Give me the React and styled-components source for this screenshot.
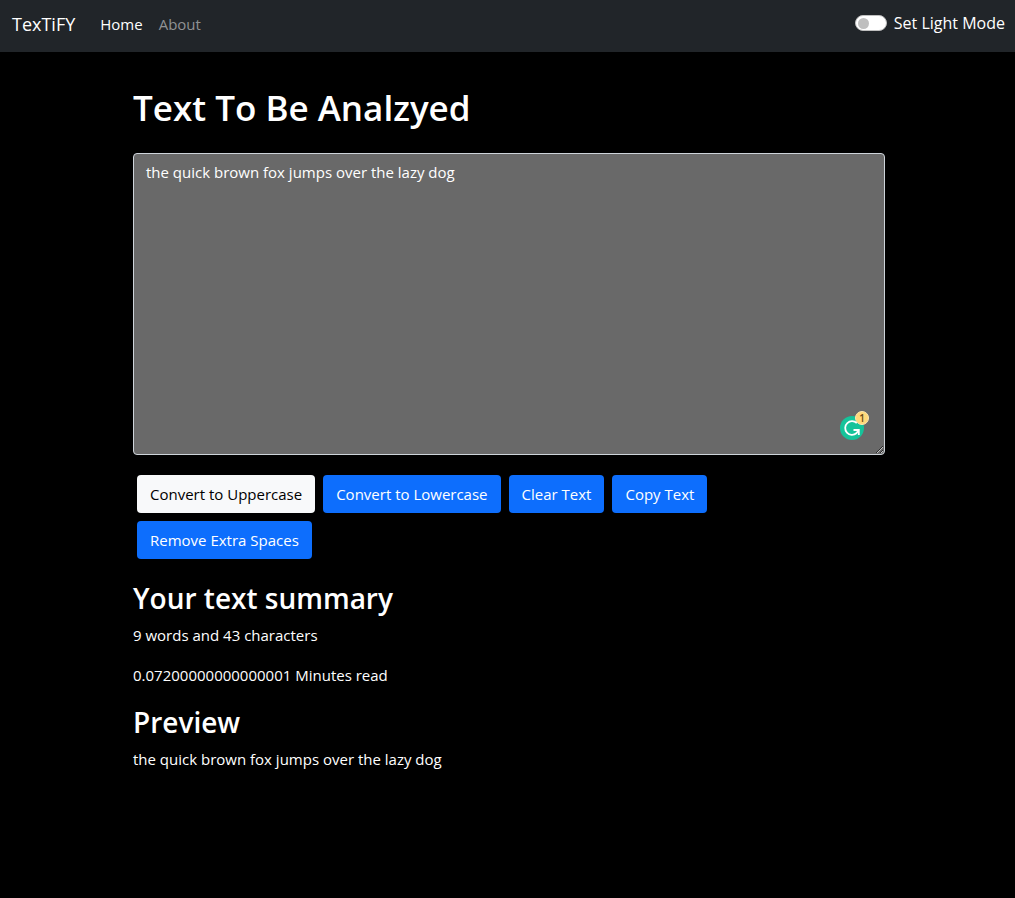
import React, { useState } from "react";
import styled, { createGlobalStyle } from "styled-components";

const GlobalStyle = createGlobalStyle`
  *, *::before, *::after { box-sizing: border-box; }
  body {
    margin: 0;
    background: ${(p) => (p.$light ? "#fff" : "#000")};
    color: ${(p) => (p.$light ? "#000" : "#fff")};
    font-family: "Open Sans", "Noto Sans", sans-serif;
    font-size: 15px;
    line-height: 24px;
  }
`;

const Navbar = styled.nav`
  display: flex;
  align-items: center;
  justify-content: space-between;
  height: 52px;
  padding: 0 10px 4px 12px;
  background: #212529;
  color: #fff;
`;

const NavGroup = styled.div`
  display: flex;
  align-items: center;
`;

const Brand = styled.a`
  margin-right: 17px;
  color: #fff;
  font-size: 18px;
  line-height: 30px;
  text-decoration: none;
`;

const NavLink = styled.a`
  padding: 0 8px;
  color: ${(p) => (p.$active ? "#fff" : "#909294")};
  text-decoration: none;
`;

const SwitchLabel = styled.label`
  display: flex;
  align-items: center;
  gap: 7px;
  padding-bottom: 2px;
  font-size: 16px;
`;

const Switch = styled.input`
  appearance: none;
  display: flex;
  align-items: center;
  width: 32px;
  height: 16px;
  margin: 0;
  padding: 0 2px;
  border: 1px solid #bfbfbf;
  border-radius: 8px;
  background: #fff;

  &::before {
    content: "";
    width: 11px;
    height: 11px;
    border-radius: 50%;
    background: #bfbfbf;
  }

  &:checked {
    justify-content: flex-end;
    background: #0d6efd;
  }
`;

const Main = styled.main`
  padding: 32px 130px 32px 133px;
`;

const Title = styled.h1`
  margin: 0 0 21px;
  font-size: 35px;
  font-weight: 600;
  line-height: 48px;
`;

const Editor = styled.div`
  position: relative;
  margin-bottom: 16px;
`;

const TextArea = styled.textarea`
  display: block;
  width: 100%;
  height: 302px;
  padding: 6px 12px;
  border: 1px solid #ced4da;
  border-radius: 4px;
  outline: none;
  background: dimgray;
  color: #fff;
  font: inherit;
`;

const Assistant = styled.svg`
  position: absolute;
  right: 14px;
  bottom: 12px;
  width: 32px;
  height: 34px;
`;

const Actions = styled.div`
  display: flex;
  flex-wrap: wrap;
  gap: 8px;
  padding: 4px 4px 0;
`;

const Button = styled.button`
  height: 38px;
  padding: 0 13px;
  border: 0;
  border-radius: 4px;
  background: ${(p) => (p.$pale ? "#f8f9fa" : "#0d6efd")};
  color: ${(p) => (p.$pale ? "#000" : "#fff")};
  font: inherit;
`;

const Summary = styled.section`
  margin-top: 20px;
`;

const Subtitle = styled.h2`
  margin: 0 0 6px;
  font-size: 28px;
  font-weight: 600;
  line-height: 38px;
`;

const Paragraph = styled.p`
  margin: 0 0 16px;
`;

export default function App() {
  const [text, setText] = useState("the quick brown fox jumps over the lazy dog");
  const [light, setLight] = useState(false);
  const words = text.split(/\s+/).filter(Boolean).length;

  return (
    <>
      <GlobalStyle $light={light} />
      <Navbar>
        <NavGroup>
          <Brand href="#">TexTiFY</Brand>
          <NavLink href="#" $active>Home</NavLink>
          <NavLink href="#about">About</NavLink>
        </NavGroup>
        <SwitchLabel>
          <Switch
            type="checkbox"
            role="switch"
            checked={light}
            onChange={(e) => setLight(e.target.checked)}
          />
          Set Light Mode
        </SwitchLabel>
      </Navbar>
      <Main>
        <Title id="editor-title">Text To Be Analzyed</Title>
        <Editor>
          <TextArea
            aria-labelledby="editor-title"
            spellCheck={false}
            value={text}
            onChange={(e) => setText(e.target.value)}
          />
          <Assistant viewBox="0 0 32 34" aria-hidden="true">
            <circle cx="13" cy="19" r="12" fill="#15c39a" />
            <path
              d="M17.8 14.2A6.8 6.8 0 1 0 17.4 24.2L19.4 21.4M14.5 21H19.8V26"
              fill="none"
              stroke="#fff"
              strokeWidth="1.8"
            />
            <circle cx="23" cy="9" r="6.5" fill="#ffd87a" stroke="#ffe9b0" />
            <text x="23" y="13" textAnchor="middle" fontSize="10" fontWeight="600" fill="#6b4a16">1</text>
          </Assistant>
        </Editor>
        <Actions>
          <Button type="button" $pale onClick={() => setText(text.toUpperCase())}>Convert to Uppercase</Button>
          <Button type="button" onClick={() => setText(text.toLowerCase())}>Convert to Lowercase</Button>
          <Button type="button" onClick={() => setText("")}>Clear Text</Button>
          <Button type="button" onClick={() => navigator.clipboard.writeText(text)}>Copy Text</Button>
          <Button type="button" onClick={() => setText(text.split(/ +/).join(" "))}>Remove Extra Spaces</Button>
        </Actions>
        <Summary>
          <Subtitle>Your text summary</Subtitle>
          <Paragraph>{`${words} words and ${text.length} characters`}</Paragraph>
          <Paragraph>{`${0.008 * words} Minutes read`}</Paragraph>
          <Subtitle>Preview</Subtitle>
          <Paragraph>{text}</Paragraph>
        </Summary>
      </Main>
    </>
  );
}
